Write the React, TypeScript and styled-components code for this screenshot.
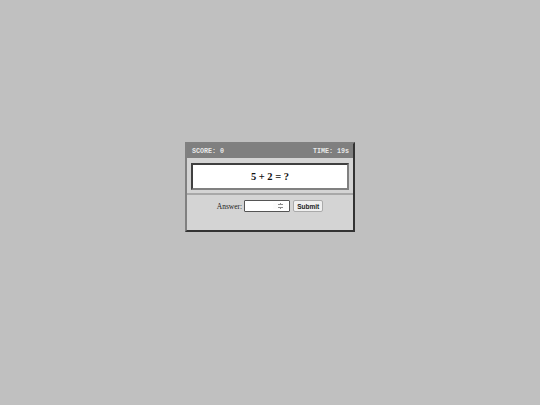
import styled, { createGlobalStyle } from "styled-components";

const Global = createGlobalStyle`
  html, body {
    margin: 0;
    padding: 0;
    background: #c0c0c0;
  }
  body {
    font-family: "Liberation Serif", "Times New Roman", serif;
  }
`;

const Panel = styled.div`
  width: 166px;
  margin: 142px auto 0;
  background: #d4d4d4;
  border: 2px solid;
  border-color: #808080 #333 #333 #808080;
`;

const Header = styled.div`
  display: flex;
  justify-content: space-between;
  align-items: center;
  height: 14px;
  padding: 0 4px 0 5px;
  background: #7f7f7f;
  color: #e8e8e8;
  font-family: "Courier New", "DejaVu Sans Mono", monospace;
  font-size: 6.7px;
  font-weight: bold;
`;

const QuestionArea = styled.div`
  padding: 5px 4px 3px;
`;

const Question = styled.div`
  height: 23px;
  display: flex;
  align-items: center;
  justify-content: center;
  background: #fff;
  border: 2px solid;
  border-color: #404040 #808080 #808080 #404040;
  font-family: "Liberation Serif", "Times New Roman", serif;
  font-size: 10.5px;
  font-weight: bold;
  color: #111;
`;

const AnswerArea = styled.form`
  height: 37px;
  border-top: 2px solid #a8a8a8;
  padding-top: 5px;
  box-sizing: border-box;
  display: flex;
  justify-content: center;
  align-items: flex-start;
  gap: 3px;
`;

const Label = styled.label`
  display: flex;
  align-items: center;
  gap: 2px;
  height: 12px;
  font-size: 7.5px;
  color: #222;
`;

const NumberInput = styled.input`
  box-sizing: border-box;
  width: 46px;
  height: 12px;
  padding: 0 1px;
  font-size: 7px;
  background: #fff;
  border: 1px solid #555;
  border-radius: 1px;
  outline: none;
`;

const SubmitButton = styled.button`
  box-sizing: border-box;
  height: 12px;
  width: 30px;
  padding: 0;
  font-family: "Liberation Sans", Arial, sans-serif;
  font-size: 6.5px;
  font-weight: bold;
  color: #222;
  background: #efefef;
  border: 1px solid #aaa;
  border-radius: 2px;
`;

export default function App() {
  return (
    <>
      <Global />
      <Panel>
        <Header>
          <span>SCORE: 0</span>
          <span>TIME: 19s</span>
        </Header>
        <QuestionArea>
          <Question>5 + 2 = ?</Question>
        </QuestionArea>
        <AnswerArea onSubmit={e => e.preventDefault()}>
          <Label>
            Answer:
            <NumberInput type="number" autoFocus />
          </Label>
          <SubmitButton type="submit">Submit</SubmitButton>
        </AnswerArea>
      </Panel>
    </>
  );
}
